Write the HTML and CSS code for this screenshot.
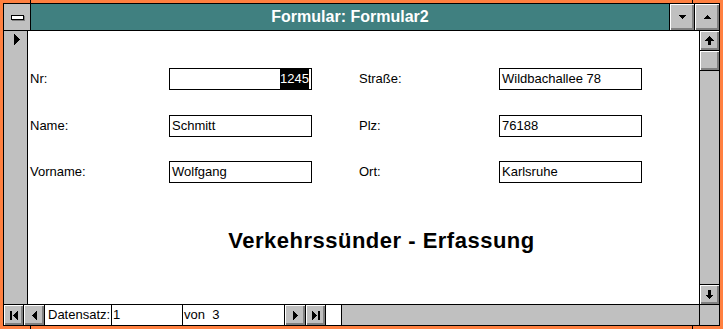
FILE: index.html
```html
<!DOCTYPE html>
<html lang="de">
<head>
    <meta charset="UTF-8">
    <title>Formular: Formular2</title>
    <link rel="stylesheet" href="styles.css">
</head>
<body>
    <div class="window">
        <div class="titlebar">
            <div class="sysmenu"><span class="sysbar"></span></div>
            <div class="caption">Formular: Formular2</div>
            <div class="tbtn">
                <svg width="7" height="4" viewBox="0 0 7 4"><polygon points="0,0 7,0 3.5,4" fill="#000"/></svg>
            </div>
            <div class="tbtn">
                <svg width="7" height="4" viewBox="0 0 7 4"><polygon points="3.5,0 7,4 0,4" fill="#000"/></svg>
            </div>
        </div>

        <div class="main">
            <div class="selector">
                <svg width="6" height="11" viewBox="0 0 6 11"><polygon points="0,0 6,5.5 0,11" fill="#000"/></svg>
            </div>

            <div class="form">
                <div class="fields">
                    <div class="label">Nr:</div>
                    <div class="field right"><span class="sel">1245</span></div>
                    <div class="label">Straße:</div>
                    <div class="field">Wildbachallee 78</div>

                    <div class="label">Name:</div>
                    <div class="field">Schmitt</div>
                    <div class="label">Plz:</div>
                    <div class="field">76188</div>

                    <div class="label">Vorname:</div>
                    <div class="field">Wolfgang</div>
                    <div class="label">Ort:</div>
                    <div class="field">Karlsruhe</div>
                </div>
                <h1 class="heading">Verkehrssünder - Erfassung</h1>
            </div>

            <div class="vscroll">
                <div class="sbtn up">
                    <svg width="9" height="9" viewBox="0 0 9 9"><polygon points="4.5,0 9,4.5 6,4.5 6,9 3,9 3,4.5 0,4.5" fill="#000"/></svg>
                </div>
                <div class="thumb"></div>
                <div class="track"></div>
                <div class="sbtn down">
                    <svg width="9" height="9" viewBox="0 0 9 9"><polygon points="3,0 6,0 6,4.5 9,4.5 4.5,9 0,4.5 3,4.5" fill="#000"/></svg>
                </div>
            </div>
        </div>

        <div class="navbar">
            <div class="nbtn w19">
                <svg width="8" height="9" viewBox="0 0 8 9"><rect x="0" y="0" width="2" height="9" fill="#000"/><polygon points="8,0 3,4.5 8,9" fill="#000"/></svg>
            </div>
            <div class="nbtn w20">
                <svg width="5" height="9" viewBox="0 0 5 9"><polygon points="5,0 0,4.5 5,9" fill="#000"/></svg>
            </div>
            <div class="ncell caption-cell">Datensatz:</div>
            <div class="ncell record">1</div>
            <div class="ncell count">von  3</div>
            <div class="nbtn w20">
                <svg width="5" height="9" viewBox="0 0 5 9"><polygon points="0,0 5,4.5 0,9" fill="#000"/></svg>
            </div>
            <div class="nbtn w19">
                <svg width="8" height="9" viewBox="0 0 8 9"><polygon points="0,0 5,4.5 0,9" fill="#000"/><rect x="6" y="0" width="2" height="9" fill="#000"/></svg>
            </div>
            <div class="ncell blank"></div>
            <div class="hscroll"></div>
            <div class="corner"></div>
        </div>
    </div>

    <!-- resize marks in the frame -->
    <span class="mark mark-tl"></span>
    <span class="mark mark-tr"></span>
    <span class="mark mark-bl"></span>
    <span class="mark mark-br"></span>
</body>
</html>
```

FILE: styles.css
```css
body {
    margin: 0;
    background: #ff8040;
    font-family: "Liberation Sans", Arial, sans-serif;
    font-size: 13px;
    color: #000;
    position: relative;
    height: 329px;
    overflow: hidden;
}

.window {
    margin: 3px;
    width: 715px;
    height: 321px;
    border: 1px solid #000;
    display: flex;
    flex-direction: column;
    background: #c0c0c0;
}

/* title bar */
.titlebar {
    display: flex;
    height: 26px;
    border-bottom: 1px solid #000;
}
.sysmenu {
    width: 26px;
    border-right: 1px solid #000;
    display: flex;
    align-items: center;
    justify-content: center;
}
.sysbar {
    width: 11px;
    height: 3px;
    background: #fff;
    border: 1px solid #000;
    box-shadow: 1px 1px 0 #808080;
}
.caption {
    flex: 1;
    background: #408080;
    color: #fff;
    font-size: 16px;
    font-weight: bold;
    line-height: 26px;
    text-align: center;
    border-right: 1px solid #000;
}
.tbtn, .sbtn, .nbtn, .thumb {
    background: #c0c0c0;
    box-shadow: inset 1px 1px #fff, inset -1px -1px #808080, inset -2px -2px #808080;
    display: flex;
    align-items: center;
    justify-content: center;
}
.tbtn {
    width: 24px;
}
.tbtn + .tbtn {
    border-left: 1px solid #000;
}
svg {
    display: block;
    shape-rendering: crispEdges;
}

/* body of the form */
.main {
    display: flex;
    height: 273px;
    border-bottom: 1px solid #000;
}
.selector {
    width: 23px;
    border-right: 1px solid #000;
}
.selector svg {
    margin: 3px 0 0 10px;
}
.form {
    flex: 1;
    background: #fff;
    border-right: 1px solid #000;
    padding: 37px 0 0 2px;
}
.fields {
    display: grid;
    grid-template-columns: 139px 190px 140px 143px;
    grid-auto-rows: 22px;
    row-gap: 24.5px;
}
.label {
    line-height: 22px;
}
.field {
    box-sizing: border-box;
    width: 143px;
    height: 22px;
    border: 1px solid #000;
    padding: 0 2px;
    line-height: 20px;
    white-space: nowrap;
    overflow: hidden;
}
.field.right {
    text-align: right;
}
.sel {
    display: inline-block;
    background: #000;
    color: #fff;
    line-height: 20px;
}
.heading {
    margin: 45px 0 0 34px;
    font-size: 22px;
    font-weight: bold;
    letter-spacing: 0.5px;
    text-align: center;
}

/* vertical scroll bar */
.vscroll {
    width: 19px;
    display: flex;
    flex-direction: column;
}
.sbtn, .thumb {
    height: 19px;
}
.up, .thumb {
    border-bottom: 1px solid #000;
}
.track {
    flex: 1;
}
.down {
    border-top: 1px solid #000;
}

/* record navigation */
.navbar {
    display: flex;
    height: 20px;
}
.nbtn, .ncell {
    border-right: 1px solid #000;
}
.w19 { width: 19px; }
.w20 { width: 20px; }
.ncell {
    background: #fff;
    line-height: 20px;
    white-space: pre;
    padding-left: 1px;
    box-sizing: border-box;
}
.caption-cell { width: 67px; padding-left: 3px; }
.record { width: 71px; }
.count { width: 102px; }
.blank { width: 16px; }
.hscroll {
    width: 357px;
    border-right: 1px solid #000;
}
.corner {
    flex: 1;
}

.mark {
    position: absolute;
    background: #000;
}
.mark-tl, .mark-tr {
    top: 0;
    width: 1px;
    height: 3px;
}
.mark-bl, .mark-br {
    bottom: 0;
    width: 1px;
    height: 3px;
}
.mark-tl, .mark-bl { left: 30px; }
.mark-tr, .mark-br { left: 692px; }
```
